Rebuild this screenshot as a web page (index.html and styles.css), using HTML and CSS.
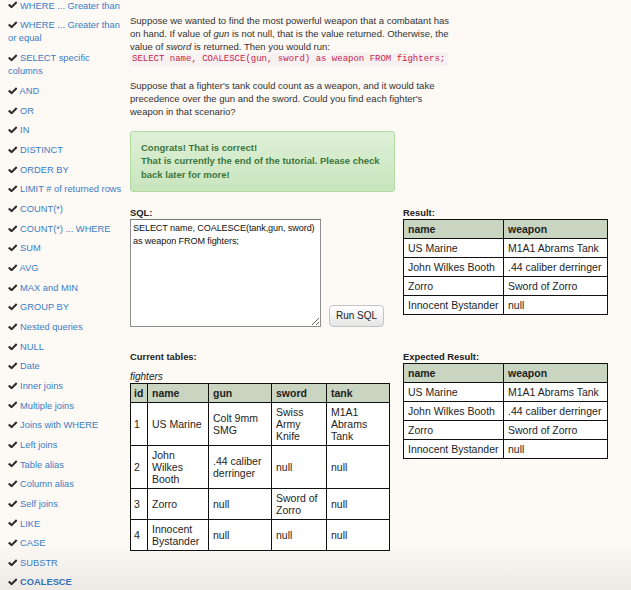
FILE: index.html
```html
<!DOCTYPE html>
<html lang="en">
<head>
<meta charset="utf-8">
<title>SQL tutorial - COALESCE</title>
<link rel="stylesheet" href="styles.css">
</head>
<body>
<svg class="defs" width="0" height="0" aria-hidden="true">
  <symbol id="ok" viewBox="0 0 10 8">
    <path d="M0 4.5 L1.6 2.9 L3.8 5 L8.4 0.3 L10 1.9 L3.8 8 Z"/>
  </symbol>
</svg>
<div class="page">
  <nav class="sidebar">
    <ul class="lessons">
      <li><svg class="check"><use href="#ok"/></svg> <a href="#">WHERE ... Greater than</a></li>
      <li><svg class="check"><use href="#ok"/></svg> <a href="#">WHERE ... Greater than<br>or equal</a></li>
      <li><svg class="check"><use href="#ok"/></svg> <a href="#">SELECT specific<br>columns</a></li>
      <li><svg class="check"><use href="#ok"/></svg> <a href="#">AND</a></li>
      <li><svg class="check"><use href="#ok"/></svg> <a href="#">OR</a></li>
      <li><svg class="check"><use href="#ok"/></svg> <a href="#">IN</a></li>
      <li><svg class="check"><use href="#ok"/></svg> <a href="#">DISTINCT</a></li>
      <li><svg class="check"><use href="#ok"/></svg> <a href="#">ORDER BY</a></li>
      <li><svg class="check"><use href="#ok"/></svg> <a href="#">LIMIT # of returned rows</a></li>
      <li><svg class="check"><use href="#ok"/></svg> <a href="#">COUNT(*)</a></li>
      <li><svg class="check"><use href="#ok"/></svg> <a href="#">COUNT(*) ... WHERE</a></li>
      <li><svg class="check"><use href="#ok"/></svg> <a href="#">SUM</a></li>
      <li><svg class="check"><use href="#ok"/></svg> <a href="#">AVG</a></li>
      <li><svg class="check"><use href="#ok"/></svg> <a href="#">MAX and MIN</a></li>
      <li><svg class="check"><use href="#ok"/></svg> <a href="#">GROUP BY</a></li>
      <li><svg class="check"><use href="#ok"/></svg> <a href="#">Nested queries</a></li>
      <li><svg class="check"><use href="#ok"/></svg> <a href="#">NULL</a></li>
      <li><svg class="check"><use href="#ok"/></svg> <a href="#">Date</a></li>
      <li><svg class="check"><use href="#ok"/></svg> <a href="#">Inner joins</a></li>
      <li><svg class="check"><use href="#ok"/></svg> <a href="#">Multiple joins</a></li>
      <li><svg class="check"><use href="#ok"/></svg> <a href="#">Joins with WHERE</a></li>
      <li><svg class="check"><use href="#ok"/></svg> <a href="#">Left joins</a></li>
      <li><svg class="check"><use href="#ok"/></svg> <a href="#">Table alias</a></li>
      <li><svg class="check"><use href="#ok"/></svg> <a href="#">Column alias</a></li>
      <li><svg class="check"><use href="#ok"/></svg> <a href="#">Self joins</a></li>
      <li><svg class="check"><use href="#ok"/></svg> <a href="#">LIKE</a></li>
      <li><svg class="check"><use href="#ok"/></svg> <a href="#">CASE</a></li>
      <li><svg class="check"><use href="#ok"/></svg> <a href="#">SUBSTR</a></li>
      <li class="current"><svg class="check"><use href="#ok"/></svg> <a href="#">COALESCE</a></li>
    </ul>
  </nav>

  <main class="main">
    <div class="intro">
      <p>Suppose we wanted to find the most powerful weapon that a combatant has on hand. If value of <em>gun</em> is not null, that is the value returned. Otherwise, the value of <em>sword</em> is returned. Then you would run:</p>
      <code class="code">SELECT name, COALESCE(gun, sword) as weapon FROM fighters;</code>
      <p>Suppose that a fighter's tank could count as a weapon, and it would take precedence over the gun and the sword. Could you find each fighter's weapon in that scenario?</p>
    </div>

    <div class="alert">Congrats! That is correct!<br>That is currently the end of the tutorial. Please check back later for more!</div>

    <div class="workspace">
      <section class="editor">
        <div class="label">SQL:</div>
        <div class="editor-row">
          <textarea class="sql" spellcheck="false">SELECT name, COALESCE(tank,gun, sword)
as weapon FROM fighters;</textarea>
          <button class="run" type="button">Run SQL</button>
        </div>
      </section>

      <section class="result">
        <div class="label">Result:</div>
        <table class="grid small">
          <tr><th class="c-name">name</th><th class="c-weapon">weapon</th></tr>
          <tr><td>US Marine</td><td>M1A1 Abrams Tank</td></tr>
          <tr><td>John Wilkes Booth</td><td>.44 caliber derringer</td></tr>
          <tr><td>Zorro</td><td>Sword of Zorro</td></tr>
          <tr><td>Innocent Bystander</td><td>null</td></tr>
        </table>
      </section>

      <section class="tables">
        <div class="label">Current tables:</div>
        <div class="caption">fighters</div>
        <table class="grid fighters">
          <tr><th class="c-id">id</th><th class="c-fname">name</th><th class="c-gun">gun</th><th class="c-sword">sword</th><th class="c-tank">tank</th></tr>
          <tr><td>1</td><td>US Marine</td><td>Colt 9mm SMG</td><td>Swiss Army Knife</td><td>M1A1 Abrams Tank</td></tr>
          <tr><td>2</td><td>John Wilkes Booth</td><td>.44 caliber derringer</td><td>null</td><td>null</td></tr>
          <tr><td>3</td><td>Zorro</td><td>null</td><td>Sword of Zorro</td><td>null</td></tr>
          <tr><td>4</td><td>Innocent Bystander</td><td>null</td><td>null</td><td>null</td></tr>
        </table>
      </section>

      <section class="expected">
        <div class="label">Expected Result:</div>
        <table class="grid small">
          <tr><th class="c-name">name</th><th class="c-weapon">weapon</th></tr>
          <tr><td>US Marine</td><td>M1A1 Abrams Tank</td></tr>
          <tr><td>John Wilkes Booth</td><td>.44 caliber derringer</td></tr>
          <tr><td>Zorro</td><td>Sword of Zorro</td></tr>
          <tr><td>Innocent Bystander</td><td>null</td></tr>
        </table>
      </section>
    </div>
  </main>
</div>
</body>
</html>
```

FILE: styles.css
```css
html {
  background-color: #edeae5;
  background-image: linear-gradient(to bottom, #fdf9f4 0, #fdf9f4 540px, #edeae5 590px);
  background-repeat: no-repeat;
  background-size: 100% 590px;
}

body {
  margin: 0;
  font-family: "Liberation Sans", Arial, Helvetica, sans-serif;
  color: #333;
}

.defs {
  position: absolute;
  width: 0;
  height: 0;
}

.page {
  display: flex;
  align-items: flex-start;
}

/* ---------- sidebar ---------- */
.sidebar {
  width: 130px;
  flex: none;
  box-sizing: border-box;
  padding-left: 8px;
}

.lessons {
  list-style: none;
  margin: -0.5px 0 0;
  padding: 0;
  font-size: 9.3px;
  line-height: 13.3px;
}

.lessons li {
  white-space: nowrap;
  margin-bottom: 6.37px;
}

.lessons a {
  color: #3a7cc6;
  text-decoration: none;
}

.lessons .current a {
  font-weight: bold;
  color: #3571b5;
}

.check {
  width: 9.5px;
  height: 7.6px;
  fill: #2b2b2b;
  vertical-align: -0.5px;
}

/* ---------- main ---------- */
.main {
  flex: 1;
  min-width: 0;
  padding-top: 13.5px;
}

.intro {
  width: 322px;
  font-size: 9.5px;
  line-height: 13px;
}

.intro p {
  margin: 0;
}

.intro p + .code + p {
  margin-top: 13.5px;
}

.code {
  display: block;
  width: 318px;
  box-sizing: border-box;
  padding: 0 2px;
  font-family: "Liberation Mono", "Courier New", monospace;
  font-size: 9px;
  line-height: 13px;
  color: #c7254e;
  background: #f8f1f1;
  border-radius: 2px;
  white-space: nowrap;
}

.alert {
  margin-top: 13px;
  width: 265px;
  box-sizing: border-box;
  padding: 9px 10px 10px;
  font-size: 9.5px;
  line-height: 13.3px;
  font-weight: bold;
  color: #3c763d;
  background: linear-gradient(to bottom, #dff0d8 0, #c8e5bc 100%);
  border: 1px solid #b2dba1;
  border-radius: 3px;
}

/* ---------- workspace ---------- */
.workspace {
  display: grid;
  grid-template-columns: 265px 228px;
  column-gap: 8px;
  row-gap: 23px;
  margin-top: 14px;
}

.label {
  font-size: 9.4px;
  line-height: 13px;
  font-weight: bold;
  color: #222;
}

.editor-row {
  display: flex;
  align-items: flex-end;
  gap: 8px;
}

.sql {
  display: block;
  width: 191px;
  height: 108px;
  box-sizing: border-box;
  margin: 0;
  padding: 2px 1px 2px 2px;
  font-family: "Liberation Sans", Arial, sans-serif;
  font-size: 9.1px;
  letter-spacing: -0.1px;
  line-height: 13px;
  color: #111;
  background: #fff;
  border: 1px solid #8e8e8e;
  border-top-color: #777;
  overflow: hidden;
}

.run {
  width: 55px;
  height: 22px;
  padding: 0;
  font-family: "Liberation Sans", Arial, sans-serif;
  font-size: 10px;
  color: #222;
  background: linear-gradient(to bottom, #ffffff 0, #f4f4f4 50%, #e4e4e4 100%);
  border: 1px solid #c4c4c4;
  border-radius: 4px;
}

.caption {
  margin-top: 7px;
  font-size: 10px;
  line-height: 13px;
  font-style: italic;
  color: #222;
}

.grid {
  border-collapse: collapse;
  table-layout: fixed;
  font-size: 10.5px;
  line-height: 12px;
  color: #1e1e1e;
  background: #fff;
}

.grid th,
.grid td {
  box-sizing: border-box;
  border: 1px solid #111;
  padding: 3px 3px 3px 4px;
  text-align: left;
  vertical-align: middle;
}

.grid th {
  background: #c9d5c1;
  font-weight: bold;
  color: #222;
}

.small {
  width: 204px;
}

.small td,
.small th {
  white-space: nowrap;
}

.c-name { width: 100px; }
.c-weapon { width: 104px; }

.fighters {
  width: 259px;
}

.c-id { width: 17px; }
.c-fname { width: 61px; }
.c-gun { width: 63px; }
.c-sword { width: 55px; }
.c-tank { width: 63px; }

.fighters th.c-id,
.fighters td:first-child {
  padding-left: 3px;
  padding-right: 2px;
}
```
